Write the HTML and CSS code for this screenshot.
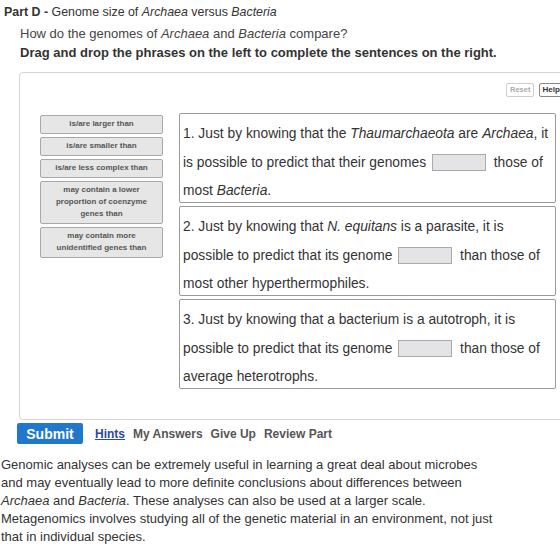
FILE: index.html
```html
<!DOCTYPE html>
<html lang="en">
<head>
  <meta charset="UTF-8" />
  <title>Part D - Genome size of Archaea versus Bacteria</title>
  <link rel="stylesheet" href="styles.css">
</head>
<body>
  <h2 class="part-title"><b>Part D -</b> Genome size of <i>Archaea</i> versus <i>Bacteria</i></h2>

  <div class="prompt">
    <p class="question">How do the genomes of <i>Archaea</i> and <i>Bacteria</i> compare?</p>
    <p class="instruction">Drag and drop the phrases on the left to complete the sentences on the right.</p>
  </div>

  <div class="panel">
    <div class="toolbar">
      <button class="tool-btn reset">Reset</button>
      <button class="tool-btn help">Help</button>
    </div>

    <div class="workspace">
      <!-- phrases to drag -->
      <div class="choices">
        <div class="choice">is/are larger than</div>
        <div class="choice">is/are smaller than</div>
        <div class="choice">is/are less complex than</div>
        <div class="choice">may contain a lower proportion of coenzyme genes than</div>
        <div class="choice">may contain more unidentified genes than</div>
      </div>

      <!-- target sentences -->
      <div class="sentences">
        <div class="sentence">1. Just by knowing that the <i>Thaumarchaeota</i> are <i>Archaea</i>, it is possible to predict that their genomes <span class="blank"></span> those of most <i>Bacteria</i>.</div>
        <div class="sentence">2. Just by knowing that <i>N. equitans</i> is a parasite, it is possible to predict that its genome <span class="blank"></span> than those of most other hyperthermophiles.</div>
        <div class="sentence">3. Just by knowing that a bacterium is a autotroph, it is possible to predict that its genome <span class="blank"></span> than those of average heterotrophs.</div>
      </div>
    </div>
  </div>

  <div class="actions">
    <button class="submit">Submit</button>
    <a class="link hints" href="#">Hints</a>
    <a class="link" href="#">My Answers</a>
    <a class="link" href="#">Give Up</a>
    <a class="link" href="#">Review Part</a>
  </div>

  <p class="context">Genomic analyses can be extremely useful in learning a great deal about microbes and may eventually lead to more definite conclusions about differences between <i>Archaea</i> and <i>Bacteria</i>. These analyses can also be used at a larger scale. Metagenomics involves studying all of the genetic material in an environment, not just that in individual species.</p>
</body>
</html>
```

FILE: styles.css
```css
:root {
  --text: #333;
  --muted: #555;
  --border: #d4d4d4;
  --blue: #1f78cc;
  --font: "Liberation Sans", Arial, sans-serif;
}

html, body {
  overflow: hidden;
}

body {
  font-family: var(--font);
  color: var(--text);
  background: #fff;
  margin: 0;
  width: 560px;
}

.part-title {
  font-size: 12.4px;
  font-weight: normal;
  margin: 0;
  padding: 4px 0 0 4px;
  line-height: 16px;
}

.part-title b {
  font-weight: bold;
}

.prompt {
  padding-left: 20px;
}

.question {
  margin: 5px 0 0;
  font-size: 13px;
  line-height: 18px;
  color: #444;
}

.instruction {
  margin: 1px 0 0;
  font-size: 13px;
  line-height: 18px;
  font-weight: bold;
}

.panel {
  margin: 10px 0 0 19px;
  width: 570px;
  height: 348px;
  border: 1px solid var(--border);
  border-radius: 4px;
  box-sizing: border-box;
}

.toolbar {
  display: flex;
  gap: 5px;
  padding: 10px 0 0 486px;
}

.tool-btn {
  font-family: var(--font);
  font-size: 7.5px;
  font-weight: bold;
  height: 14px;
  padding: 0 3px;
  border: 1px solid #bbb;
  border-radius: 2px;
  background: #fff;
  line-height: 12px;
}

.reset {
  color: #aaa;
  border-color: #ccc;
}

.help {
  color: #333;
  border-color: #888;
  font-size: 8px;
  padding: 0 2px;
}

.workspace {
  display: flex;
  align-items: flex-start;
  gap: 16px;
  padding: 16px 0 0 20px;
}

.choices {
  width: 123px;
  display: flex;
  flex-direction: column;
  gap: 3px;
  margin-top: 2px;
}

.choice {
  background: #e6e6e6;
  border: 1px solid #a8a8a8;
  border-radius: 2px;
  padding: 2px 6px 3px;
  font-size: 8px;
  font-weight: bold;
  line-height: 12px;
  color: #555;
  text-align: center;
}

.sentences {
  width: 377px;
  display: flex;
  flex-direction: column;
  gap: 3px;
}

.sentence {
  height: 90px;
  box-sizing: border-box;
  border: 1px solid #999;
  border-radius: 2px;
  padding: 6px 4px 0 3px;
  font-size: 13.8px;
  line-height: 28.5px;
  color: #333;
}

.blank {
  display: inline-block;
  width: 52px;
  height: 15px;
  background: #e4e4e6;
  border: 1px solid #aaa;
  vertical-align: middle;
  margin: 0 4px 0 2px;
}

.actions {
  display: flex;
  align-items: center;
  gap: 8px;
  padding: 3px 0 0 17px;
}

.submit {
  font-family: var(--font);
  background: var(--blue);
  color: #fff;
  border: none;
  border-radius: 2px;
  width: 66px;
  height: 21px;
  font-size: 14px;
  font-weight: bold;
  margin-right: 4px;
}

.link {
  font-size: 12px;
  font-weight: bold;
  color: var(--muted);
  text-decoration: none;
}

.link.hints {
  color: #2c4a9c;
  text-decoration: underline;
}

.context {
  margin: 12px 0 0;
  width: 495px;
  padding-left: 1px;
  font-size: 13px;
  line-height: 18px;
  color: #333;
}
```
